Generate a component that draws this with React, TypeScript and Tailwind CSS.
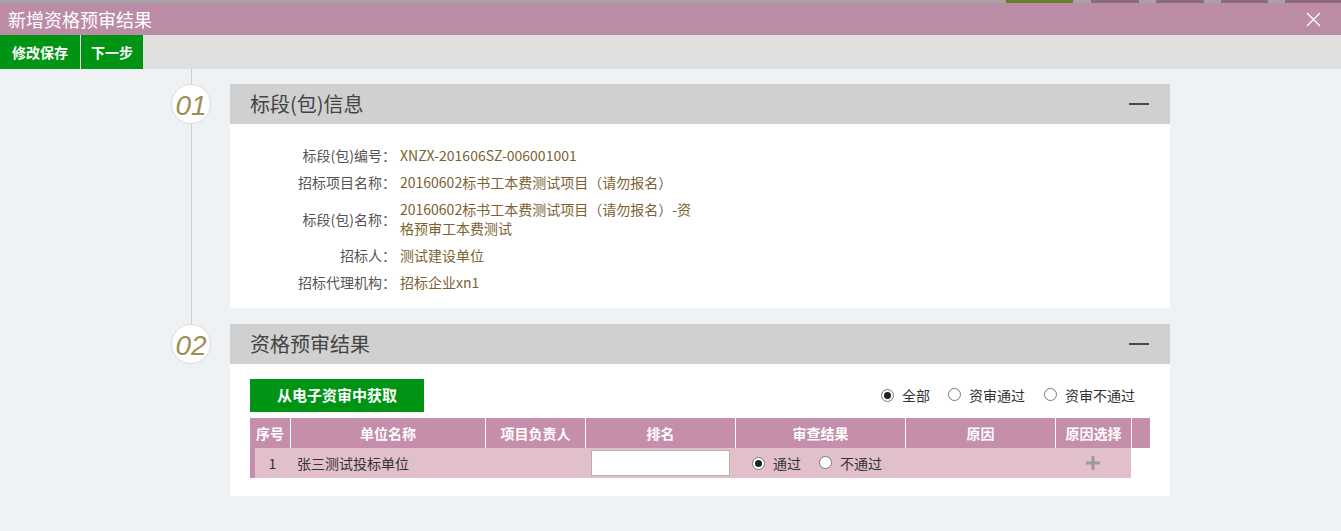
import React from "react";

const font = { fontFamily: '"Noto Sans CJK SC", "Noto Sans", sans-serif' };

function Radio({ checked }: { checked?: boolean }) {
    return (
        <span className="inline-flex items-center justify-center w-[13px] h-[13px] rounded-full border border-[#7a7a7a] bg-white shrink-0">
            {checked && <span className="w-[7px] h-[7px] rounded-full bg-[#222]" />}
        </span>
    );
}

function PanelHeader({ title }: { title: string }) {
    return (
        <div className="h-[40px] bg-[#d0d0d0] flex items-center justify-between pl-5 pr-[21px]">
            <h2 className="text-[20px] text-[#444]">{title}</h2>
            <div className="w-[20px] h-[2px] bg-[#4f4b3c]" />
        </div>
    );
}

function Step({ num }: { num: string }) {
    return (
        <div className="w-[40px] h-[40px] rounded-full bg-white border border-[#dcdcdc] flex items-center justify-center shrink-0">
            <span className="italic text-[28px] text-[#a28c55] leading-none mt-[3px]" style={{ fontFamily: '"Liberation Sans", Arial, sans-serif' }}>{num}</span>
        </div>
    );
}

const infoRows: [string, string][] = [
    ["标段(包)编号：", "XNZX-201606SZ-006001001"],
    ["招标项目名称：", "20160602标书工本费测试项目（请勿报名）"],
    ["标段(包)名称：", "20160602标书工本费测试项目（请勿报名）-资格预审工本费测试"],
    ["招标人：", "测试建设单位"],
    ["招标代理机构：", "招标企业xn1"],
];

const cols = [
    { title: "序号", w: "w-[40px]" },
    { title: "单位名称", w: "w-[195px] border-l border-white" },
    { title: "项目负责人", w: "w-[100px] border-l border-white" },
    { title: "排名", w: "w-[150px] border-l border-white" },
    { title: "审查结果", w: "w-[170px] border-l border-white" },
    { title: "原因", w: "w-[150px] border-l border-white" },
    { title: "原因选择", w: "w-[76px] border-l border-white" },
    { title: "", w: "w-[19px] border-l border-white" },
];

export default function App() {
    return (
        <div className="w-[1341px] h-[531px] bg-[#eef2f5] overflow-hidden" style={font}>
            {/* top strip */}
            <div className="h-[3px] bg-[#a4a4a4] flex">
                <div className="w-[1006px]" />
                <div className="w-[67px] bg-[#6b7d2b]" />
                <div className="w-[18px]" />
                <div className="w-[48px] bg-[#8c6a82]" />
                <div className="w-[17px]" />
                <div className="w-[48px] bg-[#8c6a82]" />
                <div className="w-[17px]" />
                <div className="w-[47px] bg-[#8c6a82]" />
                <div className="w-[17px]" />
                <div className="w-[56px] bg-[#8c6a82]" />
            </div>

            {/* title bar */}
            <div className="h-[32px] bg-[#bc8ca6] flex items-center justify-between pl-2 pr-[20px]">
                <h1 className="text-[18px] text-white">新增资格预审结果</h1>
                <svg width="15" height="15" viewBox="0 0 15 15" stroke="white" strokeWidth="1.3">
                    <path d="M1 1 L14 14 M14 1 L1 14" />
                </svg>
            </div>

            {/* toolbar */}
            <div className="h-[34px] bg-[#e0e0e0] flex">
                <button className="w-[81px] h-full bg-[#009414] text-white font-bold text-[14px] border-r border-[#e8e8e8]">修改保存</button>
                <button className="w-[62px] h-full bg-[#009414] text-white font-bold text-[14px]">下一步</button>
            </div>

            <div className="w-[1000px] ml-[170px]">
                {/* section 1 */}
                <div className="flex">
                    <div className="w-[60px] flex flex-col items-center pr-[18px]">
                        <div className="w-px h-[15px] bg-[#cfcfcf]" />
                        <Step num="01" />
                        <div className="w-px flex-1 bg-[#cfcfcf]" />
                    </div>
                    <div className="w-[940px] mt-[15px] bg-white">
                        <PanelHeader title="标段(包)信息" />
                        <div className="pt-[18px] pb-[12px]">
                            {infoRows.map(([label, value]) => (
                                <div key={label} className="flex items-center py-1 text-[14px] leading-[19px]">
                                    <div className="w-[166px] text-right text-[#555]">{label}</div>
                                    <div className="w-[300px] ml-[4px] text-[#7c6233]">{value}</div>
                                </div>
                            ))}
                        </div>
                    </div>
                </div>

                {/* section 2 */}
                <div className="flex">
                    <div className="w-[60px] flex flex-col items-center pr-[18px]">
                        <div className="w-px h-[16px] bg-[#cfcfcf]" />
                        <Step num="02" />
                    </div>
                    <div className="w-[940px] mt-[16px] bg-white">
                        <PanelHeader title="资格预审结果" />
                        <div className="px-5 pt-[15px] pb-[18px]">
                            <div className="flex items-center justify-between">
                                <button className="w-[174px] h-[33px] bg-[#009414] text-white font-bold text-[15px]">从电子资审中获取</button>
                                <div className="flex items-center text-[14px] text-[#333] pr-[15px]">
                                    <Radio checked />
                                    <span className="ml-[8px]">全部</span>
                                    <span className="ml-[18px]"><Radio /></span>
                                    <span className="ml-[8px]">资审通过</span>
                                    <span className="ml-[19px]"><Radio /></span>
                                    <span className="ml-[8px]">资审不通过</span>
                                </div>
                            </div>

                            <div className="mt-[6px] w-[900px]">
                                <div className="flex h-[30px] bg-[#c58eab] text-white font-bold text-[14px]">
                                    {cols.map((c, i) => (
                                        <div key={i} className={`${c.w} flex items-center justify-center`}>{c.title}</div>
                                    ))}
                                </div>
                                <div className="flex h-[30px] text-[14px] text-[#333]">
                                    <div className="w-[40px] flex bg-[#e2c0cb]">
                                        <div className="w-[5px] bg-[#c58eab]" />
                                        <div className="flex-1 flex items-center justify-center">1</div>
                                    </div>
                                    <div className="w-[195px] bg-[#e2c0cb] flex items-center pl-[7px]">张三测试投标单位</div>
                                    <div className="w-[100px] bg-[#e2c0cb]" />
                                    <div className="w-[150px] bg-[#e2c0cb] flex items-center pl-[6px]">
                                        <input className="w-[139px] h-[26px] bg-white border border-[#b9b29b] outline-none px-1" />
                                    </div>
                                    <div className="w-[170px] bg-[#e2c0cb] flex items-center pl-[17px]">
                                        <Radio checked />
                                        <span className="ml-[8px]">通过</span>
                                        <span className="ml-[18px]"><Radio /></span>
                                        <span className="ml-[8px]">不通过</span>
                                    </div>
                                    <div className="w-[150px] bg-[#e2c0cb]" />
                                    <div className="w-[76px] bg-[#e2c0cb] flex items-center justify-center">
                                        <svg width="14" height="14" viewBox="0 0 14 14" stroke="#9a9a9a" strokeWidth="3">
                                            <path d="M7 0 V14 M0 7 H14" />
                                        </svg>
                                    </div>
                                    <div className="w-[19px] bg-white" />
                                </div>
                            </div>
                        </div>
                    </div>
                </div>
            </div>
        </div>
    );
}
